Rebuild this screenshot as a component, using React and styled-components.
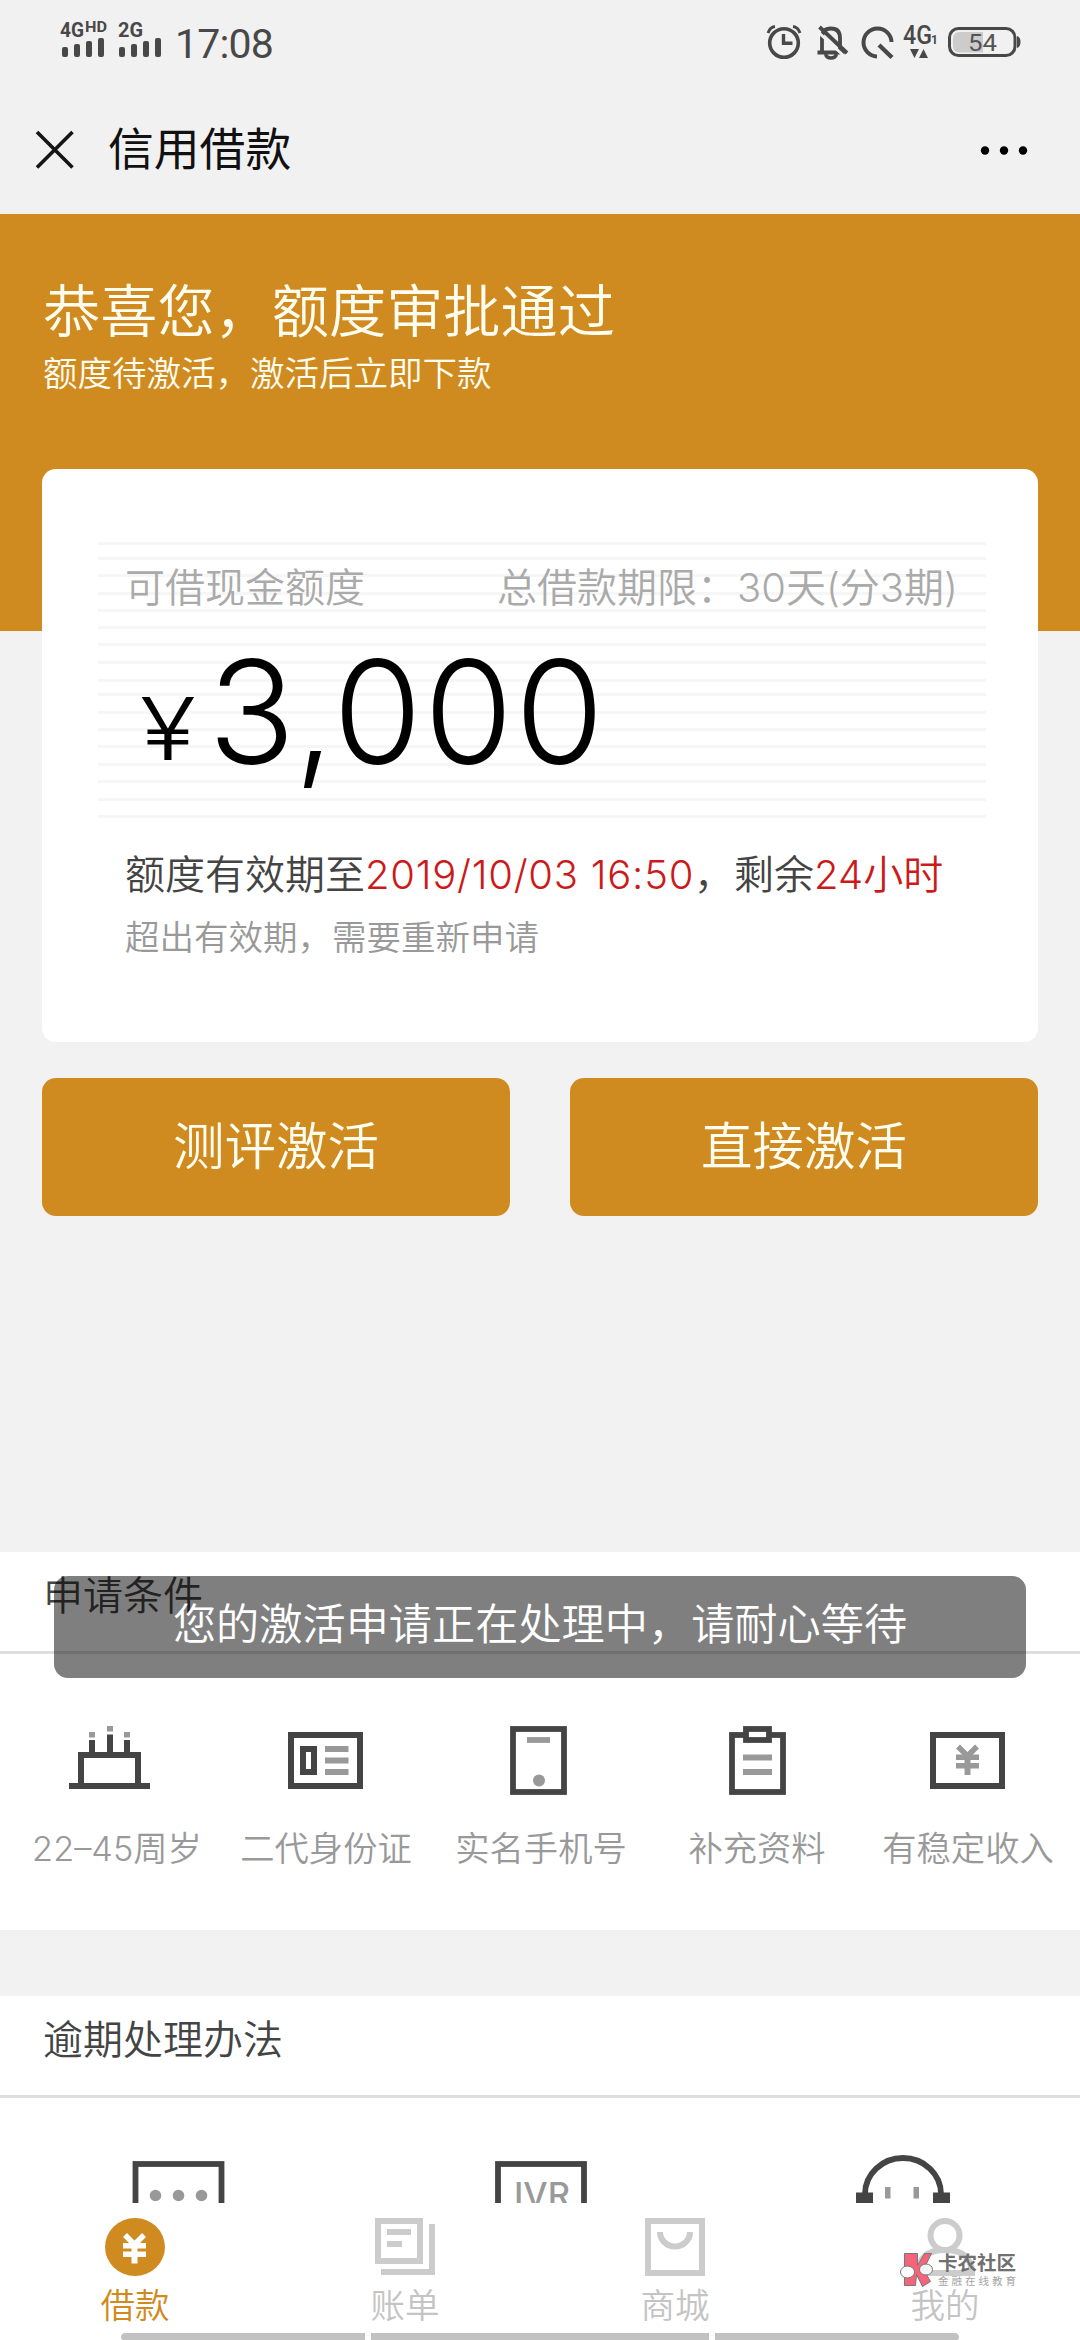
import React from "react";
import styled, { createGlobalStyle } from "styled-components";

const GlobalStyle = createGlobalStyle`
  * {
    box-sizing: border-box;
  }

  body {
    margin: 0;
    background: #f2f2f2;
    font-family: Inter, "Noto Sans CJK SC", sans-serif;
    font-weight: 350;
  }

  svg {
    display: block;
    flex: none;
    overflow: visible;
  }
`;

const Page = styled.div`
  position: relative;
  display: flex;
  flex-direction: column;
  width: 1080px;
  height: 2340px;
  overflow: hidden;
  background: #f2f2f2;
`;

const StatusBar = styled.div`
  display: flex;
  justify-content: space-between;
  height: 86px;
  padding: 20px 60px 0;
  background: #f1f1f1;
`;

const StatusGroup = styled.div`
  display: flex;
  align-items: flex-start;
`;

const Clock = styled.span`
  margin-left: 11px;
  color: #484848;
  font-family: Roboto, sans-serif;
  font-size: 41px;
  font-weight: 400;
  line-height: 49px;
  letter-spacing: -0.8px;
`;

const NavBar = styled.div`
  display: flex;
  align-items: center;
  height: 128px;
  padding: 0 53px 0 36px;
  background: #f1f1f1;
`;

const NavTitle = styled.h1`
  flex: 1;
  margin: 0 0 0 34px;
  color: #111;
  font-size: 45.8px;
  font-weight: 400;
  line-height: 60px;
`;

const Content = styled.div`
  flex: 1;
  min-height: 0;
  overflow: hidden;
`;

const Hero = styled.div`
  height: 417px;
  padding: 68px 43px 0;
  background: #cf8b20;
  color: #fffdf0;
`;

const HeroTitle = styled.div`
  font-size: 57.2px;
  line-height: 60px;
`;

const HeroText = styled.div`
  margin-top: 12px;
  font-size: 34.5px;
  line-height: 40px;
`;

const Card = styled.div`
  position: relative;
  height: 573px;
  margin: -162px 42px 0;
  padding: 94px 80px 0 83px;
  border-radius: 14px;
  background: #fff;

  > div {
    position: relative;
  }
`;

const Stripes = styled.svg`
  position: absolute;
  top: 0;
  left: 0;
`;

const LabelRow = styled.div`
  display: flex;
  justify-content: space-between;
  color: #aaa;
  font-size: 40px;
  line-height: 50px;
`;

const Amount = styled.div`
  display: flex;
  align-items: baseline;
  margin-top: 24px;
  padding-left: 15px;
  color: #000;
  font-size: 144px;
  font-weight: 300;
  line-height: 150px;
  letter-spacing: 2px;
`;

const Currency = styled.span`
  width: 68px;
  font-size: 86px;
  line-height: 1;
  transform: translateY(-4px) scaleX(1.2);
  transform-origin: left;
`;

const Validity = styled.div`
  margin-top: 63px;
  color: #444;
  font-size: 40px;
  line-height: 50px;
  white-space: nowrap;
`;

const Highlight = styled.span`
  color: #cc1a1a;
  letter-spacing: ${(props) => (props.$wide ? "0.75px" : "normal")};
`;

const Note = styled.div`
  margin-top: 18px;
  color: #999;
  font-size: 34.5px;
  line-height: 40px;
`;

const Actions = styled.div`
  display: flex;
  gap: 60px;
  padding: 36px 42px 336px;
`;

const ActionButton = styled.button`
  flex: 1;
  height: 138px;
  padding: 0 0 9px;
  border: 0;
  border-radius: 14px;
  background: #cf8b20;
  color: #fffdf0;
  font-family: inherit;
  font-size: 51.5px;
  font-weight: 350;
`;

const Section = styled.section`
  height: 378px;
  margin-bottom: 66px;
  background: #fff;
`;

const SectionTitle = styled.h2`
  height: 102px;
  margin: 0;
  padding-left: 43px;
  border-bottom: 3px solid #dfdfdf;
  color: #444;
  font-size: 40px;
  font-weight: 350;
  line-height: 87px;
`;

const Conditions = styled.div`
  display: grid;
  grid-template-columns: 214px 204px 226px 206px 216px;
  padding: 66px 0 0 10px;
`;

const Methods = styled.div`
  display: grid;
  grid-template-columns: repeat(3, 1fr);
  justify-items: center;
  padding-top: 52px;
`;

const Condition = styled.div`
  display: flex;
  flex-direction: column;
  align-items: center;
  gap: 29px;
  color: #999;
  font-size: 34.3px;
  line-height: 40px;
  white-space: nowrap;
`;

const Toast = styled.div`
  position: absolute;
  top: 1576px;
  left: 54px;
  width: 972px;
  height: 102px;
  border-radius: 14px;
  background: rgba(0, 0, 0, 0.5);
  color: #fff;
  font-size: 43.2px;
  line-height: 97px;
  text-align: center;
`;

const TabBar = styled.nav`
  position: relative;
  display: grid;
  grid-template-columns: repeat(4, 1fr);
  height: 137px;
  background: #fff;
`;

const Tab = styled.div`
  display: flex;
  flex-direction: column;
  align-items: center;
  gap: 10px;
  padding-top: 15px;
  color: ${(props) => (props.$active ? "#cf8b20" : "#c4c4c4")};
  font-size: 34.5px;
  line-height: 40px;
`;

const HomeIndicator = styled.div`
  position: absolute;
  bottom: 0;
  left: 121px;
  display: grid;
  grid-template-columns: 244px 338px 244px;
  gap: 6px;

  span {
    height: 7px;
    background: #c2c2c2;
  }

  span:first-child {
    border-radius: 6px 0 0 4px;
  }

  span:last-child {
    border-radius: 0 6px 4px 0;
  }
`;

const Watermark = styled.div`
  position: absolute;
  top: 2252px;
  left: 900px;
  display: flex;
  gap: 5px;
`;

const WatermarkText = styled.div`
  color: #707070;
  font-size: 19.5px;
  font-weight: 700;
  line-height: 23px;
  white-space: nowrap;

  small {
    display: block;
    color: #a4a4a4;
    font-size: 10.5px;
    font-weight: 400;
    line-height: 14px;
    letter-spacing: 3px;
  }
`;

const DARK = "#444";
const GRAY = "#999";
const LIGHT = "#ccc";

const STRIPES = [
  74, 89, 106, 124, 141, 158, 175, 193, 211, 225, 243, 260, 277, 295, 312, 330,
  347,
];

function SignalIcon() {
  const bars = [
    [2, 27],
    [14, 24],
    [26, 21],
    [38, 18],
  ];
  return (
    <svg width="104" height="40" fill="#484848">
      <g fontFamily="Roboto" fontWeight="700">
        <text x="0" y="16.500" fontSize="20" textLength="24" lengthAdjust="spacingAndGlyphs">
          4G
        </text>
        <text x="25" y="12" fontSize="14" textLength="22" lengthAdjust="spacingAndGlyphs">
          HD
        </text>
        <text x="58" y="16.500" fontSize="20" textLength="25" lengthAdjust="spacingAndGlyphs">
          2G
        </text>
      </g>
      {[0, 57].map((dx) =>
        bars.map(([x, y]) => (
          <rect key={x + dx} x={x + dx} y={y} width="6" height={37 - y} rx="2" />
        ))
      )}
    </svg>
  );
}

// alarm, muted bell, data saver, network and battery, drawn as one strip
function StatusIcons() {
  return (
    <svg width="254" height="44" viewBox="766 20 254 44" fill="none" stroke="#484848">
      <circle cx="784" cy="43" r="14.3" strokeWidth="3.6" />
      <path d="M783.5 34v9.3h9" strokeWidth="3.4" />
      <path d="M768 33q2-6 7-6.500M800 33q-2-6-7-6.500" strokeWidth="3" />
      <path
        d="M822 51V38q0-9.500 9-9.500t9 9.500v13M817.500 52.500h27"
        strokeWidth="3.8"
      />
      <path d="M825.500 54q1 4 5.500 4t5.500-4" strokeWidth="3.4" />
      <path d="M816 30l29 27" stroke="#f1f1f1" strokeWidth="3" />
      <path d="M819.500 27l27.500 26" strokeWidth="3.8" />
      <path d="M891.500 42A14 14 0 1 0 877 56.500" strokeWidth="4" />
      <path d="M879 45l13 12.500" strokeWidth="4.400" />
      <g fill="#484848" stroke="none">
        <text
          x="903"
          y="44"
          fontFamily="Roboto"
          fontSize="25"
          fontWeight="500"
          textLength="29"
          lengthAdjust="spacingAndGlyphs"
        >
          4G
        </text>
        <text x="931" y="44" fontFamily="Roboto" fontSize="12" fontWeight="700">
          1
        </text>
        <path d="M910 49h9l-4.500 9zM919 58h9l-4.500-9z" />
        <path d="M1017 36q3.500 1 3.500 6t-3.500 6z" />
      </g>
      <rect x="949.500" y="28.500" width="65.500" height="27" rx="9" strokeWidth="3" />
      <path d="M983 32v20.500h-23q-7 0-7-7V39q0-7 7-7z" fill="#ccc" stroke="none" />
      <text
        x="968"
        y="51"
        fill="#555"
        stroke="none"
        fontFamily="Roboto"
        fontSize="24"
        fontWeight="400"
        textLength="29"
        lengthAdjust="spacingAndGlyphs"
      >
        54
      </text>
    </svg>
  );
}

function Yuan({ x, y, color }) {
  return (
    <g transform={`translate(${x} ${y})`}>
      <path d="M2 2l9.500 9.500L21 2" fill="none" stroke={color} strokeWidth="5.500" />
      <path d="M0 10h23v5.500h-8.500v3H23V24h-8.500v6.500h-6V24H0v-5.500h8.500v-3H0z" fill={color} />
    </g>
  );
}

function CakeIcon() {
  return (
    <svg width="100" height="80" fill={DARK}>
      <path d="M22 12h6v5.500h-6zM40 6h6v5.500h-6zM57 12h6v5.500h-6z" fill={GRAY} />
      <path d="M22 20h6v13h-6zM40 14.500h6V33h-6zM57 20h6v13h-6zM2 63h81v6H2z" />
      <path d="M14 66V35h57v31" fill="none" stroke={DARK} strokeWidth="6" />
    </svg>
  );
}

function IdCardIcon() {
  return (
    <svg width="100" height="80" fill="none" stroke={DARK} strokeWidth="6">
      <rect x="15" y="15" width="69" height="51" />
      <rect x="27" y="29" width="11" height="23" />
      <path d="M49 29h23.500M49 40.500h23.500M49 52h23.500" stroke={GRAY} />
    </svg>
  );
}

function PhoneIcon() {
  return (
    <svg width="100" height="80" fill="none" stroke={DARK} strokeWidth="5.8">
      <rect x="22" y="9" width="51" height="63" />
      <path d="M36 20h23" stroke={GRAY} />
      <circle cx="48" cy="60.500" r="6" fill={GRAY} stroke="none" />
    </svg>
  );
}

function ClipboardIcon() {
  return (
    <svg width="100" height="80" fill="none" stroke={DARK} strokeWidth="5.8">
      <rect x="25" y="15" width="51" height="57" />
      <rect x="39" y="9" width="23" height="11" fill="#fff" />
      <path d="M36 37.500h29M36 52h29" stroke={GRAY} />
    </svg>
  );
}

function IncomeIcon() {
  return (
    <svg width="100" height="80" fill="none">
      <rect x="15" y="15" width="69" height="51" stroke={DARK} strokeWidth="6" />
      <Yuan x={38} y={24.5} color={GRAY} />
    </svg>
  );
}

function SmsIcon() {
  return (
    <svg width="110" height="80" fill={GRAY}>
      <rect x="10.500" y="14" width="86" height="63" fill="none" stroke={DARK} strokeWidth="5.8" />
      <circle cx="30.500" cy="45.500" r="5.8" />
      <circle cx="53.500" cy="45.500" r="5.8" />
      <circle cx="76.500" cy="45.500" r="5.8" />
    </svg>
  );
}

function IvrIcon() {
  return (
    <svg width="110" height="80">
      <rect x="13" y="14" width="86" height="63" fill="none" stroke={DARK} strokeWidth="5.8" />
      <text
        x="29"
        y="57"
        fill={GRAY}
        fontFamily="Inter"
        fontSize="34"
        fontWeight="500"
        textLength="56"
        lengthAdjust="spacingAndGlyphs"
      >
        IVR
      </text>
    </svg>
  );
}

function ServiceIcon() {
  return (
    <svg width="110" height="80" fill={DARK}>
      <path d="M20 44a38 36 0 0 1 76 0" fill="none" stroke={DARK} strokeWidth="5.8" />
      <path d="M11 42.500h17V70H11zM88 42.500h17V70H88z" />
      <path d="M40 37h5.500v11.500H40zM68.500 37H74v11.500h-5.500z" fill={GRAY} />
    </svg>
  );
}

function LoanIcon() {
  return (
    <svg width="60" height="58">
      <ellipse cx="30" cy="29" rx="30" ry="29" fill="#cf8b20" />
      <Yuan x={18} y={15} color="#fff" />
    </svg>
  );
}

function BillIcon() {
  return (
    <svg width="60" height="58" fill="none" stroke={LIGHT} strokeWidth="6">
      <rect x="3" y="3" width="42" height="40" />
      <path d="M12 14h24M12 26h15M6 54h51V6" />
    </svg>
  );
}

function MallIcon() {
  return (
    <svg width="60" height="58" fill="none" stroke={LIGHT} strokeWidth="6">
      <rect x="3" y="3" width="54" height="52" />
      <path d="M15 14a15 14.500 0 0 0 30 0" />
    </svg>
  );
}

function MineIcon() {
  return (
    <svg width="60" height="58" fill="none" stroke={LIGHT} strokeWidth="6">
      <circle cx="30" cy="17.500" r="14.500" />
      <path d="M3 55q1-23 27-23t27 23z" />
    </svg>
  );
}

function WatermarkLogo() {
  return (
    <svg width="33" height="36" stroke="#777" strokeWidth="1">
      <path
        d="M4.500 1.500h13v12l7-12h7l-8 16 7 12-8 5-6-12-1 11h-11z"
        fill="#f5647a"
      />
      <ellipse cx="7.500" cy="20" rx="7" ry="6" fill="#fff" />
      <ellipse cx="26" cy="17.500" rx="6.500" ry="5.500" fill="#f4f4f4" />
    </svg>
  );
}

const conditions = [
  { label: "22–45周岁", icon: <CakeIcon /> },
  { label: "二代身份证", icon: <IdCardIcon /> },
  { label: "实名手机号", icon: <PhoneIcon /> },
  { label: "补充资料", icon: <ClipboardIcon /> },
  { label: "有稳定收入", icon: <IncomeIcon /> },
];

const tabs = [
  { label: "借款", icon: <LoanIcon />, active: true },
  { label: "账单", icon: <BillIcon /> },
  { label: "商城", icon: <MallIcon /> },
  { label: "我的", icon: <MineIcon /> },
];

export default function App() {
  return (
    <Page>
      <GlobalStyle />
      <StatusBar>
        <StatusGroup>
          <SignalIcon />
          <Clock>17:08</Clock>
        </StatusGroup>
        <StatusIcons />
      </StatusBar>
      <NavBar>
        <svg width="38" height="38" stroke="#151515" strokeWidth="3.6">
          <path d="M1 1l35.500 35.500M36.500 1L1 36.500" />
        </svg>
        <NavTitle>信用借款</NavTitle>
        <svg width="46" height="10" fill="#000">
          <circle cx="4" cy="5.500" r="4.2" />
          <circle cx="23" cy="5.500" r="4.2" />
          <circle cx="42" cy="5.500" r="4.2" />
        </svg>
      </NavBar>

      <Content>
        <Hero>
          <HeroTitle>恭喜您，额度审批通过</HeroTitle>
          <HeroText>额度待激活，激活后立即下款</HeroText>
        </Hero>

        <Card>
          <Stripes width="996" height="360">
            {STRIPES.map((y) => (
              <rect key={y} x="56" y={y - 1} width="888" height="3" fill="#f6f6f6" />
            ))}
          </Stripes>
          <LabelRow>
            <span>可借现金额度</span>
            <span>总借款期限：30天(分3期)</span>
          </LabelRow>
          <Amount>
            <Currency>¥</Currency>3,000
          </Amount>
          <Validity>
            额度有效期至<Highlight $wide>2019/10/03 16:50</Highlight>，剩余
            <Highlight>24小时</Highlight>
          </Validity>
          <Note>超出有效期，需要重新申请</Note>
        </Card>

        <Actions>
          <ActionButton>测评激活</ActionButton>
          <ActionButton>直接激活</ActionButton>
        </Actions>

        <Section>
          <SectionTitle>申请条件</SectionTitle>
          <Conditions>
            {conditions.map(({ label, icon }) => (
              <Condition key={label}>
                {icon}
                <span>{label}</span>
              </Condition>
            ))}
          </Conditions>
        </Section>

        <Section>
          <SectionTitle>逾期处理办法</SectionTitle>
          <Methods>
            <SmsIcon />
            <IvrIcon />
            <ServiceIcon />
          </Methods>
        </Section>
      </Content>

      <TabBar>
        {tabs.map(({ label, icon, active }) => (
          <Tab key={label} $active={active}>
            {icon}
            <span>{label}</span>
          </Tab>
        ))}
        <HomeIndicator>
          <span />
          <span />
          <span />
        </HomeIndicator>
      </TabBar>

      <Toast>您的激活申请正在处理中，请耐心等待</Toast>

      <Watermark>
        <WatermarkLogo />
        <WatermarkText>
          卡农社区
          <small>金融在线教育</small>
        </WatermarkText>
      </Watermark>
    </Page>
  );
}
